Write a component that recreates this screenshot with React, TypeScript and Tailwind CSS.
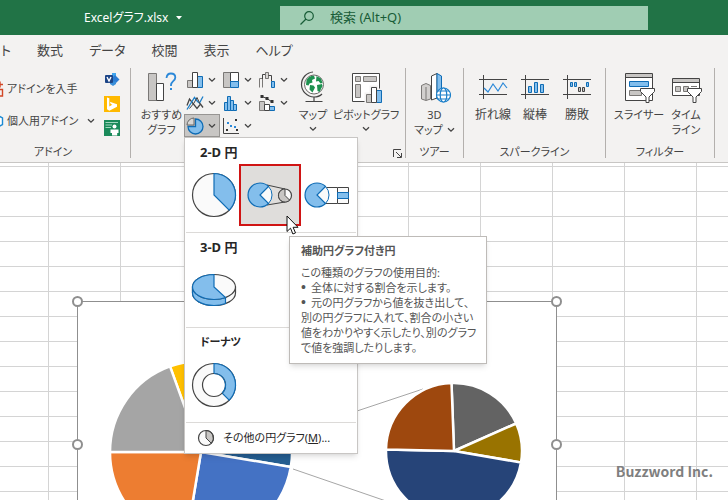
import type { ReactNode } from "react";

type IconProps = { className?: string };

const INK = "#444444";
const BLUE = "#83beec";
const BLUE_LINE = "#0f6cb5";

function Chevron({ className = "" }: IconProps) {
  return (
    <svg viewBox="0 0 8 6" className={`h-1.5 w-2 shrink-0 ${className}`} fill="none" stroke={INK} strokeWidth="1.3">
      <path d="M1 1.2 4 4.2 7 1.2" />
    </svg>
  );
}

function StoreIcon() {
  return (
    <svg viewBox="0 0 16 16" className="h-4 w-4 shrink-0" fill="none" stroke="#d24726" strokeWidth="1.4">
      <path d="M1 3h5v5H1zM3 8.500h11.500V15H3M9 8.500V15M12 .5v6M9 3.500h6" />
    </svg>
  );
}

function HexIcon() {
  return (
    <svg viewBox="0 0 16 16" className="h-4 w-4 shrink-0" fill="#ffffff" stroke="#1b8ad3" strokeWidth="1.4">
      <path d="M8 1.500 14.500 5v6.500L8 15 1.500 11.500V5z" />
    </svg>
  );
}

function VisioIcon() {
  return (
    <svg viewBox="0 0 16 16" className="h-4 w-4">
      <path d="M8 1h4v4H8z" fill="#41a5ee" />
      <path d="m11 3 4.500 4.500L11 12 6.500 7.500z" fill="#2b7cd3" />
      <path d="M6 9.500h6V12l-3 2-3-2z" fill="#3a8fd9" />
      <rect x="1" y="3" width="8" height="8" rx="1" fill="#1c4587" />
      <path d="m3 5 2 4 2-4" fill="none" stroke="#ffffff" strokeWidth="1.4" />
    </svg>
  );
}

function BingIcon() {
  return (
    <svg viewBox="0 0 16 16" className="h-4 w-4">
      <rect width="16" height="16" fill="#ffb900" />
      <path d="M3 1.500 5.300 2.300v8.200l3-1.700-1.500-.7-1-2.400L13 8.200v2.500L5.300 14.700 3 13.300z" fill="#ffffff" />
    </svg>
  );
}

function PeopleGraphIcon() {
  return (
    <svg viewBox="0 0 16 16" className="h-4 w-4">
      <rect width="16" height="16" fill="#1a8a5a" />
      <path d="M1.500 2.500H14M1.500 5H8M1.500 7.500H7" stroke="#9fd6bd" strokeWidth="1.2" />
      <circle cx="10.500" cy="6.500" r="2" fill="#ffffff" />
      <path d="M6.500 9.500h8V13h-1.300v2.500H8V13H6.500z" fill="#ffffff" />
    </svg>
  );
}

function RecommendedIcon() {
  return (
    <svg viewBox="0 0 32 32" className="h-8 w-8" fill="none">
      <path d="M2.500 2.500h8v27h-8z" fill="#c8c6c4" stroke="#7a7876" />
      <path d="M10.500 12.500h7v17h-7z" fill="#ffffff" stroke={INK} />
      <path d="M20.500 7c.3-3 2-4.500 4.400-4.500 2.600 0 4.400 1.600 4.400 4 0 3.600-4.300 3.800-4.300 7.500v1" stroke="#2b88d8" strokeWidth="1.800" />
      <path d="M24 17h2v2h-2z" fill="#2b88d8" />
    </svg>
  );
}

function ColumnIcon() {
  return (
    <svg viewBox="0 0 18 18" className="h-[18px] w-[18px]">
      <path d="M1.500 9.500h5v7h-5z" fill="#c8c6c4" stroke="#7a7876" />
      <path d="M11.500 5.500h5v11h-5z" fill={BLUE} stroke={BLUE_LINE} />
      <path d="M6.500 1.500h5v15h-5z" fill="#ffffff" stroke={INK} />
    </svg>
  );
}

function TreemapIcon() {
  return (
    <svg viewBox="0 0 18 18" className="h-[18px] w-[18px]">
      <path d="M1.500 1.500h7v15h-7z" fill="#c8c6c4" stroke="#7a7876" />
      <path d="M8.500 1.500h8v9h-8z" fill="#ffffff" stroke={INK} />
      <path d="M8.500 10.500h8v6h-8z" fill={BLUE} stroke={BLUE_LINE} />
    </svg>
  );
}

function WaterfallIcon() {
  return (
    <svg viewBox="0 0 18 18" className="h-[18px] w-[18px]" fill="#ffffff">
      <path d="M1.500 16.500v-9h3v9" fill="none" stroke="#7a7876" />
      <path d="M4.500 8V3.500h3v4" fill="none" stroke={INK} />
      <path d="M7.500 1.500h3v6h-3z" stroke="#7a7876" fill="#d8d6d4" />
      <path d="M10.500 4.500h3v6" fill="none" stroke={INK} />
      <path d="M13.500 10.500h3v6h-3z" stroke={BLUE_LINE} fill={BLUE} />
    </svg>
  );
}

function LineIcon() {
  return (
    <svg viewBox="0 0 18 18" className="h-[18px] w-[18px]" fill="none" strokeWidth="1.3">
      <path d="M1 11.500 3.500 5 11 14.500l3.500-4.500 2.500 3.500" stroke={INK} />
      <path d="m1 15.500 7.500-12 3 4L13.500 9 17 2.500" stroke="#1b7fc9" />
      <path d="M3.500 14.500 8 9l3-5.500 3 6.500" stroke={INK} strokeWidth="1" />
    </svg>
  );
}

function HistogramIcon() {
  return (
    <svg viewBox="0 0 18 18" className="h-[18px] w-[18px]" fill={BLUE} stroke={BLUE_LINE}>
      <path d="M2.500 8.500h3v8h-3zM5.500 2.500h3v14h-3zM8.500 6.500h3v10h-3zM11.500 10.500h3v6h-3z" />
    </svg>
  );
}

function ComboIcon() {
  return (
    <svg viewBox="0 0 18 18" className="h-[18px] w-[18px]">
      <path d="M1.500 7.500h5v9h-5z" fill="#c8c6c4" stroke="#7a7876" />
      <path d="M11.500 12.500h5v4h-5z" fill={BLUE} stroke={BLUE_LINE} />
      <path d="M6.500 10.500h5v6h-5z" fill="#ffffff" stroke={INK} />
      <path d="m4 2.500 5 2 5 3.500" fill="none" stroke={INK} />
      <path d="M2.500 1h3v3h-3zM7.500 3h3v3h-3zM12.500 6h3v3h-3z" fill="#333333" />
    </svg>
  );
}

function PieIcon() {
  return (
    <svg viewBox="0 0 18 18" className="h-[18px] w-[18px]">
      <path d="M9.500 2a7.500 7.500 0 1 1-7.500 7.500h7.500z" fill={BLUE} stroke={BLUE_LINE} strokeWidth="1.3" />
      <path d="M8 1v7H1a7 7 0 0 1 7-7z" fill="#d8d6d4" stroke="#6a6866" />
    </svg>
  );
}

function ScatterIcon() {
  return (
    <svg viewBox="0 0 18 18" className="h-[18px] w-[18px]">
      <path d="M1.500 1v15.500H17" fill="none" stroke={INK} />
      <path d="M4 12h2v2H4zM13 2h2v2h-2zM14 12h2v2h-2z" fill="#333333" />
      <path d="M5 5h2v2H5zM8 8h2v2H8zM12 9h2v2h-2z" fill="#2b88d8" />
    </svg>
  );
}

function GlobeIcon() {
  return (
    <svg viewBox="0 0 32 32" className="h-8 w-8" fill="none">
      <circle cx="17" cy="13.500" r="9.500" fill="#ffffff" stroke="#6a6866" />
      <path d="M9.500 9C11 6 14 4.500 17 4.700l1 2.800-3 1.500.5 2.500-3 1-1 2-2.500-.5zM19.500 5l4.500 2.500 1.500 4.500-2 .5-2-2.500-2.500.5zM13 14l3.500.5 1.500 2-2.500 5-3-3zM20 14l5-1 .5 2-3 6-2-1z" fill="#1e9150" />
      <path d="M16 1C9.500 1.500 4.500 7 4.500 13.500S10 26 17 26c3 0 6-1 8-3M17 26v4M8.500 30.500h17" stroke={INK} strokeWidth="1.200" />
    </svg>
  );
}

function PivotChartIcon() {
  return (
    <svg viewBox="0 0 32 32" className="h-8 w-8">
      <path d="M2.500 2.500h27v28h-27z" fill="#ffffff" stroke={INK} />
      <path d="M5.500 5.500h5v5h-5zM13.500 5.500h13v5h-13zM5.500 13.500h5v13h-5z" fill="#c8c6c4" stroke="#7a7876" />
      <path d="M19.500 14.500H28v3h4v14H14.500v-10h5z" fill="#f3f2f1" />
      <path d="M16.500 23.500h5v8h-5z" fill="#c8c6c4" stroke="#7a7876" />
      <path d="M26.500 19.500h5v12h-5z" fill={BLUE} stroke={BLUE_LINE} />
      <path d="M21.500 16.500h5v15h-5z" fill="#ffffff" stroke={INK} />
    </svg>
  );
}

function Map3DIcon() {
  return (
    <svg viewBox="0 0 32 32" className="h-8 w-8">
      <path d="M2.500 14.500 7 12.500l4.500 2V28L7 29.500 2.500 28z" fill="#d2d0ce" stroke="#7a7876" />
      <path d="M7 16v13" stroke="#7a7876" />
      <path d="m12.500 5 5.500-2.500V27l-5.500 2z" fill="#ffffff" stroke={INK} />
      <path d="m18 2.500 4.500 2.500v22L18 28z" fill={BLUE} stroke={BLUE_LINE} />
      <g fill="#ffffff" stroke="#1b7fc9" strokeWidth="1.200">
        <circle cx="24.500" cy="24" r="7" />
        <ellipse cx="24.500" cy="24" rx="3.300" ry="7" />
        <path d="M17.500 24h14M19 20h11M19 28h11" fill="none" />
      </g>
    </svg>
  );
}

function SparkAxes({ children }: { children: ReactNode }) {
  return (
    <svg viewBox="0 0 32 32" className="h-8 w-8" fill="none">
      <path d="M2 8.500h28M2 23.500h28M6.500 4v24" stroke={INK} />
      {children}
    </svg>
  );
}

function SlicerIcon() {
  return (
    <svg viewBox="0 0 32 32" className="h-8 w-8">
      <path d="M2.500 2.500h27v27h-27z" fill="#ffffff" stroke={INK} />
      <path d="M3 3h26v3H3z" fill="#c8c6c4" />
      <path d="M2.500 6.500h27" stroke={INK} />
      <path d="M6.500 10.500h19v5h-19z" fill={BLUE} stroke={BLUE_LINE} />
      <path d="M6.500 19.500h12v5h-12z" fill="#c8c6c4" stroke="#7a7876" />
      <path d="M17.500 17.500h14v3L26 26v5.500h-3V26l-5.500-5.500z" fill="#ffffff" stroke={INK} />
    </svg>
  );
}

function TimelineIcon() {
  return (
    <svg viewBox="0 0 32 32" className="h-8 w-8">
      <path d="M2.500 7.500h27v17h-27z" fill="#ffffff" stroke={INK} />
      <path d="M3 8h26v3H3z" fill="#c8c6c4" />
      <path d="M2.500 11.500h27" stroke={INK} />
      <path d="M5.500 15.500h5v5h-5zM13.500 15.500h5v5h-5z" fill="#c8c6c4" stroke="#7a7876" />
      <path d="M21 15.500h6" stroke="#7a7876" />
      <path d="M17.500 17.500h14v3L26 26v5.500h-3V26l-5.500-5.500z" fill="#ffffff" stroke={INK} />
    </svg>
  );
}

function Pie2DPreview() {
  return (
    <svg viewBox="0 0 46 46" className="h-[46px] w-[46px]">
      <circle cx="23" cy="23" r="21.500" fill="#fafafa" stroke={INK} strokeWidth="1.200" />
      <path d="M23 1.500A21.500 21.500 0 0 1 38.200 38.200L23 23z" fill={BLUE} stroke={BLUE_LINE} strokeWidth="1.200" />
    </svg>
  );
}

function PieOfPiePreview() {
  return (
    <svg viewBox="0 0 46 46" className="h-[46px] w-[46px]">
      <path d="m20 13 18 4M20 33l18-3" stroke={INK} fill="none" />
      <path d="M21.500 14.500a12 12 0 0 1 0 17L13 23z" fill="#fafafa" stroke={BLUE_LINE} />
      <path d="M21.500 14.500A12 12 0 1 0 21.500 31.500L13 23z" fill={BLUE} stroke={BLUE_LINE} strokeWidth="1.200" />
      <circle cx="38" cy="23.500" r="6.500" fill="#fafafa" stroke={INK} strokeWidth="1.200" />
      <path d="M38 17a6.500 6.500 0 1 0 4.600 11.100L38 23.500z" fill="#c8c6c4" stroke={INK} />
    </svg>
  );
}

function BarOfPiePreview() {
  return (
    <svg viewBox="0 0 46 46" className="h-[46px] w-[46px]">
      <path d="M21 15.500h12.500M21 31.500h12.500" stroke={INK} fill="none" />
      <path d="M33.500 15.500h11v16h-11z" fill="#fafafa" stroke={INK} />
      <path d="M33.500 20.500h11v6h-11z" fill={BLUE} stroke={BLUE_LINE} />
      <path d="M21.500 14.500a12 12 0 0 1 0 17L13 23z" fill="#fafafa" stroke={BLUE_LINE} />
      <path d="M21.500 14.500A12 12 0 1 0 21.500 31.500L13 23z" fill={BLUE} stroke={BLUE_LINE} strokeWidth="1.200" />
    </svg>
  );
}

function Pie3DPreview() {
  return (
    <svg viewBox="0 0 46 46" className="h-[46px] w-[46px]" strokeWidth="1.200">
      <path d="M1.500 20v6c0 7 9.600 12.500 21.500 12.500S44.500 33 44.500 26v-6z" fill="#fafafa" stroke={INK} />
      <path d="M1.500 20v6c0 7 9.600 12.500 21.500 12.500 4 0 8-.7 11.500-2v-6z" fill={BLUE} stroke={BLUE_LINE} />
      <ellipse cx="23" cy="20" rx="21.500" ry="12.500" fill="#fafafa" stroke={INK} />
      <path d="M23 7.500C11.100 7.500 1.500 13.100 1.500 20S11.100 32.500 23 32.500c4.300 0 8.300-.7 11.500-2L23 20z" fill={BLUE} stroke={BLUE_LINE} />
    </svg>
  );
}

function DoughnutPreview() {
  return (
    <svg viewBox="0 0 46 46" className="h-[46px] w-[46px]" strokeWidth="1.200">
      <circle cx="23" cy="23" r="21.500" fill="#fafafa" stroke={INK} />
      <path d="M23 1.500A21.500 21.500 0 0 1 38.200 38.200L23 23z" fill={BLUE} stroke={BLUE_LINE} />
      <circle cx="23" cy="23" r="11.500" fill="#ffffff" stroke={INK} />
      <path d="M23 11.500a11.500 11.500 0 0 1 8.100 19.600" fill="none" stroke={BLUE_LINE} />
    </svg>
  );
}

function MorePieIcon() {
  return (
    <svg viewBox="0 0 18 18" className="h-[18px] w-[18px]">
      <circle cx="9" cy="9" r="7.500" fill="#fafafa" />
      <path d="M9 1.500a7.500 7.500 0 0 1 5.300 12.800L9 9z" fill="#c8c6c4" stroke={INK} />
      <circle cx="9" cy="9" r="7.500" fill="none" stroke={INK} strokeWidth="1.200" />
    </svg>
  );
}

function RibbonGroup({ label, width, children }: { label?: string; width: string; children: ReactNode }) {
  return (
    <section className={`relative flex shrink-0 flex-col border-r border-[#b3b0ad] ${width}`}>
      <div className="flex flex-1">{children}</div>
      <h2 className="h-3 text-center text-[11px] leading-3">{label}</h2>
    </section>
  );
}

function BigButton({ icon, width, children }: { icon: ReactNode; width: string; children: ReactNode }) {
  return (
    <button type="button" className={`flex shrink-0 flex-col items-center self-start pt-[3px] whitespace-nowrap ${width}`}>
      {icon}
      <span className="mt-1 flex flex-col items-center text-[11px] leading-[15px]">{children}</span>
    </button>
  );
}

function SmallButton({ label, icon, active = false }: { label: string; icon: ReactNode; active?: boolean }) {
  return (
    <button
      type="button"
      aria-label={label}
      className={
        active
          ? "flex h-[23px] w-9 items-center gap-1 border border-[#979593] bg-[#c8c6c4] px-px"
          : "flex h-[23px] w-9 items-center gap-1 px-0.5"
      }
    >
      {icon}
      <Chevron />
    </button>
  );
}

function Bullet() {
  return <span className="inline-block w-2.5 font-['Liberation_Sans'] text-[14px] leading-none">•</span>;
}

function Tooltip() {
  return (
    <div role="tooltip" className="absolute top-[72px] left-[50px] z-10 w-[198px] border border-[#bebbb8] bg-white px-[11px] pt-1.5 pb-2 text-left whitespace-nowrap text-[#555555] shadow-md">
      <p className="mb-1.5 text-[11px] leading-4 font-bold">補助円グラフ付き円</p>
      <div className="text-[11px] leading-[15px]">
        <p>この種類のグラフの使用目的:</p>
        <p className="h-[15px]">
          <Bullet />
          全体に対する割合を示します。
        </p>
        <p className="h-[15px]">
          <Bullet />
          元の円グラフから値を抜き出して、
        </p>
        <p>
          別の円グラフに入れて、割合の小さい
          <br />
          値をわかりやすく示したり、別のグラフ
          <br />
          で値を強調したりします。
        </p>
      </div>
    </div>
  );
}

function Cursor() {
  return (
    <svg viewBox="0 0 13 20" className="absolute top-[51px] left-[47px] z-20 h-5 w-[13px]">
      <path d="M1 1v15.500l3.500-3.300 2.400 5.800 2.600-1.100-2.400-5.600H12z" fill="#ffffff" stroke="#111111" />
    </svg>
  );
}

function PieMenu() {
  return (
    <div role="menu" className="absolute top-full left-0 z-10 w-[174px] border border-[#c8c6c4] bg-white px-px text-[#262626] shadow-md">
      <section className="h-[95px] border-b border-[#dcdad8] pt-1.5">
        <h3 className="pl-3.5 text-[13px] leading-4 font-bold">2-D 円</h3>
        <div className="mt-1 flex items-center">
          <button type="button" role="menuitem" aria-label="円" className="w-[53px] pl-[5px]">
            <Pie2DPreview />
          </button>
          <div className="relative">
            <button type="button" role="menuitem" aria-label="補助円グラフ付き円" className="flex h-[62px] w-[62px] items-center justify-center border-2 border-[#d01414] bg-[#dfdddb]">
              <PieOfPiePreview />
            </button>
            <Cursor />
            <Tooltip />
          </div>
          <button type="button" role="menuitem" aria-label="補助縦棒グラフ付き円" className="w-[50px] pl-[3px]">
            <BarOfPiePreview />
          </button>
        </div>
      </section>
      <section className="h-[95px] border-b border-[#dcdad8] pt-1.5">
        <h3 className="pl-3.5 text-[13px] leading-4 font-bold">3-D 円</h3>
        <button type="button" role="menuitem" aria-label="3-D 円" className="mt-3 w-[53px] pl-[5px]">
          <Pie3DPreview />
        </button>
      </section>
      <section className="h-[95px] border-b border-[#dcdad8] pt-1.5">
        <h3 className="pl-3.5 text-[11px] leading-4 font-bold">ドーナツ</h3>
        <button type="button" role="menuitem" aria-label="ドーナツ" className="mt-3 w-[53px] pl-[5px]">
          <DoughnutPreview />
        </button>
      </section>
      <button type="button" role="menuitem" className="flex h-[30px] w-full items-center gap-2 pl-[11px] text-[11px] whitespace-nowrap">
        <MorePieIcon />
        <span>
          その他の円グラフ(<u>M</u>)...
        </span>
      </button>
    </div>
  );
}

function Ribbon() {
  return (
    <div className="relative z-10 flex h-[97px] shrink-0 border-b border-[#c8c6c4] bg-[#f3f2f1] pt-0.5 pb-1 text-[#444444]">
      {/* first group runs past the left edge of the window */}
      <RibbonGroup label="アドイン" width="-ml-6 w-[155px]">
        <div className="ml-3 flex w-[107px] flex-col gap-3 pt-[11px] text-[11px] whitespace-nowrap">
          <button type="button" className="flex h-5 items-center gap-[3px]">
            <StoreIcon />
            アドインを入手
          </button>
          <button type="button" className="flex h-5 items-center gap-[3px]">
            <HexIcon />
            個人用アドイン
            <Chevron className="ml-auto" />
          </button>
        </div>
        <div className="ml-[9px] flex flex-col gap-2 pt-1">
          <button type="button" aria-label="Visio">
            <VisioIcon />
          </button>
          <button type="button" aria-label="Bing">
            <BingIcon />
          </button>
          <button type="button" aria-label="People Graph">
            <PeopleGraphIcon />
          </button>
        </div>
      </RibbonGroup>

      <RibbonGroup width="w-[275px]">
        <div className="pl-2">
          <BigButton icon={<RecommendedIcon />} width="w-[45px]">
            <span>おすすめ</span>
            <span>グラフ</span>
          </BigButton>
        </div>
        <div className="grid h-[69px] grid-cols-3">
          <SmallButton label="縦棒/横棒" icon={<ColumnIcon />} />
          <SmallButton label="階層構造" icon={<TreemapIcon />} />
          <SmallButton label="ウォーターフォール" icon={<WaterfallIcon />} />
          <SmallButton label="折れ線/面" icon={<LineIcon />} />
          <SmallButton label="統計" icon={<HistogramIcon />} />
          <SmallButton label="複合" icon={<ComboIcon />} />
          <div className="relative">
            <SmallButton label="円/ドーナツ" icon={<PieIcon />} active />
            <PieMenu />
          </div>
          <SmallButton label="散布図/バブル" icon={<ScatterIcon />} />
        </div>
        <BigButton icon={<GlobeIcon />} width="w-[42px]">
          <span>マップ</span>
          <Chevron className="mt-1" />
        </BigButton>
        <BigButton icon={<PivotChartIcon />} width="w-16">
          <span>ピボットグラフ</span>
          <Chevron className="mt-1" />
        </BigButton>
        <button type="button" aria-label="グラフの詳細" className="absolute right-[3px] bottom-0">
          <svg viewBox="0 0 9 9" className="h-[9px] w-[9px]" fill="none" stroke={INK}>
            <path d="M.5 8V.5H8M3 3l5 5M8.500 4v4.500H4" />
          </svg>
        </button>
      </RibbonGroup>

      <RibbonGroup label="ツアー" width="w-[58px]">
        <BigButton icon={<Map3DIcon />} width="w-[57px]">
          <span>3D</span>
          <span className="flex items-center gap-1">
            マップ
            <Chevron />
          </span>
        </BigButton>
      </RibbonGroup>

      <RibbonGroup label="スパークライン" width="w-[142px]">
        <div className="flex pl-2">
          <BigButton
            width="w-[42px]"
            icon={
              <SparkAxes>
                <path d="m7 17 4 4 5-8 5 7 5-8 4 5" stroke="#2b88d8" strokeWidth="1.200" />
              </SparkAxes>
            }
          >
            <span className="text-[12px]">折れ線</span>
          </BigButton>
          <BigButton
            width="w-[42px]"
            icon={
              <SparkAxes>
                <path d="M9.500 15.500h3v6h-3zM15.500 11.500h3v10h-3zM21.500 13.500h3v8h-3z" fill={BLUE} stroke={BLUE_LINE} />
              </SparkAxes>
            }
          >
            <span className="text-[12px]">縦棒</span>
          </BigButton>
          <BigButton
            width="w-[42px]"
            icon={
              <SparkAxes>
                <path d="M9.500 11.500h2v4h-2zM13.500 11.500h2v4h-2zM25.500 11.500h2v4h-2z" fill={BLUE} stroke={BLUE_LINE} />
                <path d="M17.500 16.500h2v4h-2zM21.500 16.500h2v4h-2z" fill="#c8c6c4" stroke={INK} />
              </SparkAxes>
            }
          >
            <span className="text-[12px]">勝敗</span>
          </BigButton>
        </div>
      </RibbonGroup>

      <RibbonGroup label="フィルター" width="w-[109px]">
        <div className="flex pl-2">
          <BigButton icon={<SlicerIcon />} width="w-[50px]">
            スライサー
          </BigButton>
          <BigButton icon={<TimelineIcon />} width="w-11">
            <span>タイム</span>
            <span>ライン</span>
          </BigButton>
        </div>
      </RibbonGroup>
    </div>
  );
}

function SelectionHandle({ className }: { className: string }) {
  return <span className={`absolute h-[11px] w-[11px] rounded-full border-2 border-[#8f8f8f] bg-white ${className}`} />;
}

function EmbeddedChart() {
  return (
    <div className="absolute top-[138px] left-[77px] h-[287px] w-[480px] border border-[#8f8f8f] bg-white">
      <svg viewBox="0 0 478 285" className="h-[285px] w-[478px]">
        <path d="M153 151 345 87M215 167l93 32" fill="none" stroke="#a6a6a6" />
        <g stroke="#ffffff" strokeWidth="2.500">
          <path d="M123 150 92 64.400A91 91 0 0 1 155 65z" fill="#ffc000" />
          <path d="M123 150 155 65A91 91 0 0 1 212.800 165z" fill="#255e91" />
          <path d="M123 150 212.800 165A91 91 0 0 1 108 239.800z" fill="#4472c4" />
          <path d="M123 150 108 239.800A91 91 0 0 1 32 150z" fill="#ed7d31" />
          <path d="M123 150H32A91 91 0 0 1 92 64.400z" fill="#a5a5a5" />
          <path d="m376 149-2.500-68A68 68 0 0 1 438.200 121.500z" fill="#636363" />
          <path d="m376 149 62.200-27.500A68 68 0 0 1 443 160.500z" fill="#997300" />
          <path d="m376 149 67 11.500A68 68 0 0 1 308 147.500z" fill="#264478" />
          <path d="m376 149-68-1.500A68 68 0 0 1 373.500 81z" fill="#9e480e" />
        </g>
      </svg>
      <SelectionHandle className="-top-1.5 -left-1.5" />
      <SelectionHandle className="-top-1.5 -right-1.5" />
      <SelectionHandle className="top-[137px] -left-1.5" />
      <SelectionHandle className="top-[137px] -right-1.5" />
    </div>
  );
}

const tabs = ["ト", "数式", "データ", "校閲", "表示", "ヘルプ"];

export default function App() {
  return (
    <div className="flex h-screen flex-col overflow-hidden bg-white font-['Noto_Sans','Noto_Sans_CJK_JP',sans-serif] [font-feature-settings:'palt']">
      <header className="flex h-[35px] shrink-0 items-center bg-[#217346] pr-20 pl-[84px] text-white">
        <button type="button" className="flex w-[196px] shrink-0 items-center gap-2 text-[12px]">
          Excelグラフ.xlsx
          <svg viewBox="0 0 6 4" className="h-1 w-1.5" fill="#ffffff">
            <path d="M0 0h6L3 3.500z" />
          </svg>
        </button>
        <label className="flex h-6 flex-1 items-center gap-4 bg-[#a0cdb3] pl-5 text-[#185c37]">
          <svg viewBox="0 0 14 14" className="h-3.5 w-3.5 shrink-0" fill="none" stroke="#185c37" strokeWidth="1.200">
            <circle cx="9" cy="5" r="4.300" />
            <path d="m6 8-5.500 5.500" />
          </svg>
          <input
            type="search"
            aria-label="検索"
            placeholder="検索 (Alt+Q)"
            className="w-full bg-transparent text-[13px] outline-none placeholder:text-[#185c37]"
          />
        </label>
      </header>

      <nav className="flex h-[31px] shrink-0 items-center gap-[26px] bg-[#f3f2f1] pl-px text-[13px] text-[#444444]">
        {tabs.map((tab) => (
          <button key={tab} type="button" className="shrink-0">
            {tab}
          </button>
        ))}
      </nav>

      <Ribbon />

      <main className="relative flex-1 overflow-hidden bg-[linear-gradient(to_right,#d4d4d4_1px,transparent_1px),linear-gradient(to_bottom,#d4d4d4_1px,transparent_1px)] bg-[size:72px_25px] bg-[position:48px_3px]">
        <EmbeddedChart />
        <p className="absolute right-[15px] bottom-5 font-['Noto_Sans_CJK_JP'] text-[14px] leading-[18px] font-bold text-[#7f7f7f]">Buzzword Inc.</p>
      </main>
    </div>
  );
}
